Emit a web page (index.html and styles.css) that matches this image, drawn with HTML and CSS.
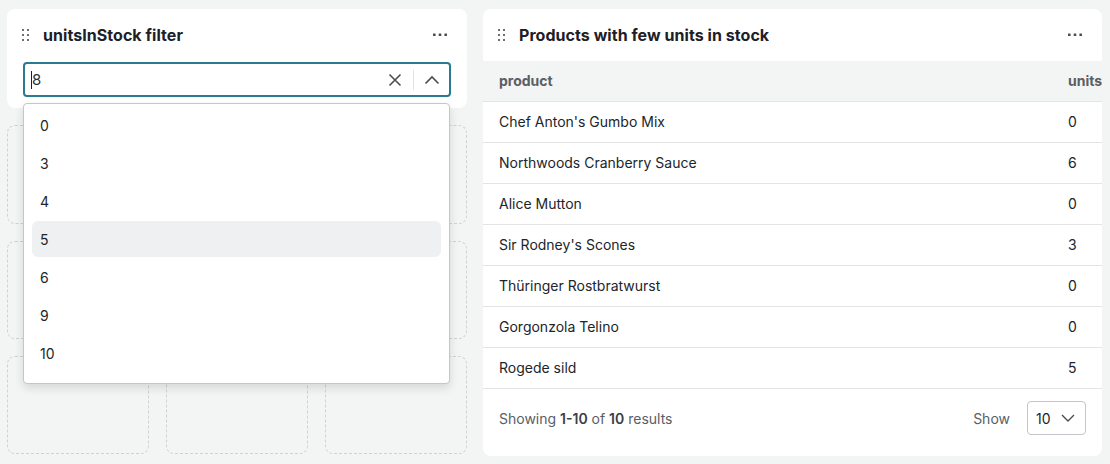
FILE: index.html
```html
<!DOCTYPE html>
<html lang="en">
<head>
<meta charset="utf-8">
<title>Dashboard</title>
<link rel="stylesheet" href="styles.css">
</head>
<body>
<div class="board">
  <div class="left-col">
    <section class="panel filter-panel">
      <header class="panel-head">
        <svg class="handle" width="8" height="12" viewBox="0 0 8 12"><g fill="#6b6f76"><rect x="0" y="0" width="2" height="2"/><rect x="5" y="0" width="2" height="2"/><rect x="0" y="5" width="2" height="2"/><rect x="5" y="5" width="2" height="2"/><rect x="0" y="10" width="2" height="2"/><rect x="5" y="10" width="2" height="2"/></g></svg>
        <h2 class="panel-title">unitsInStock filter</h2>
        <svg class="more" width="14" height="4" viewBox="0 0 14 4"><g fill="#4a4d52"><rect x="0" y="0.5" width="2.6" height="2.6" rx="0.5"/><rect x="5.7" y="0.5" width="2.6" height="2.6" rx="0.5"/><rect x="11.4" y="0.5" width="2.6" height="2.6" rx="0.5"/></g></svg>
      </header>
      <div class="combo">
        <span class="combo-value"><span class="caret"></span>8</span>
        <svg class="clear" width="14" height="14" viewBox="0 0 14 14"><path d="M1.5 1.5 L12.5 12.5 M12.5 1.5 L1.5 12.5" stroke="#4a4d52" stroke-width="1.6" fill="none"/></svg>
        <span class="sep"></span>
        <svg class="chev" width="16" height="10" viewBox="0 0 16 10"><path d="M1.5 8.5 L8 2 L14.5 8.5" stroke="#4a4d52" stroke-width="1.6" fill="none"/></svg>
      </div>
    </section>
    <div class="slots">
      <div class="slot"></div><div class="slot"></div><div class="slot"></div>
      <div class="slot"></div><div class="slot"></div><div class="slot"></div>
      <div class="slot"></div><div class="slot"></div><div class="slot"></div>
    </div>
    <ul class="dropdown">
      <li class="opt">0</li>
      <li class="opt">3</li>
      <li class="opt">4</li>
      <li class="opt active">5</li>
      <li class="opt">6</li>
      <li class="opt">9</li>
      <li class="opt">10</li>
    </ul>
  </div>

  <section class="panel table-panel">
    <header class="panel-head">
      <svg class="handle" width="8" height="12" viewBox="0 0 8 12"><g fill="#6b6f76"><rect x="0" y="0" width="2" height="2"/><rect x="5" y="0" width="2" height="2"/><rect x="0" y="5" width="2" height="2"/><rect x="5" y="5" width="2" height="2"/><rect x="0" y="10" width="2" height="2"/><rect x="5" y="10" width="2" height="2"/></g></svg>
      <h2 class="panel-title">Products with few units in stock</h2>
      <svg class="more" width="14" height="4" viewBox="0 0 14 4"><g fill="#4a4d52"><rect x="0" y="0.5" width="2.6" height="2.6" rx="0.5"/><rect x="5.7" y="0.5" width="2.6" height="2.6" rx="0.5"/><rect x="11.4" y="0.5" width="2.6" height="2.6" rx="0.5"/></g></svg>
    </header>
    <div class="table-wrap">
      <table class="grid">
        <thead>
          <tr><th class="c-prod">product</th><th class="c-units">units</th></tr>
        </thead>
        <tbody>
          <tr><td>Chef Anton's Gumbo Mix</td><td>0</td></tr>
          <tr><td>Northwoods Cranberry Sauce</td><td>6</td></tr>
          <tr><td>Alice Mutton</td><td>0</td></tr>
          <tr><td>Sir Rodney's Scones</td><td>3</td></tr>
          <tr><td>Thüringer Rostbratwurst</td><td>0</td></tr>
          <tr><td>Gorgonzola Telino</td><td>0</td></tr>
          <tr><td>Rogede sild</td><td>5</td></tr>
        </tbody>
      </table>
    </div>
    <footer class="table-foot">
      <span class="count">Showing <b>1-10</b> of <b>10</b> results</span>
      <span class="show">Show</span>
      <span class="pager">10
        <svg width="14" height="8" viewBox="0 0 14 8"><path d="M1 1 L7 7 L13 1" stroke="#4a4d52" stroke-width="1.4" fill="none"/></svg>
      </span>
    </footer>
  </section>
</div>
</body>
</html>
```

FILE: styles.css
```css
* { box-sizing: border-box; }
html, body { margin: 0; padding: 0; }
body {
  background: #f3f4f4;
  font-family: Inter, Roboto, "Liberation Sans", sans-serif;
  color: #21252b;
  font-size: 14px;
}
.board {
  display: grid;
  grid-template-columns: 460px 619px;
  gap: 16px;
  padding: 9px 0 0 7px;
}
.left-col { position: relative; }
.panel {
  background: #fff;
  border-radius: 8px;
}
.filter-panel {
  height: 99px;
  padding: 0 16px;
}
.panel-head {
  display: flex;
  align-items: center;
  height: 52px;
}
.filter-panel .panel-head { height: 51px; margin-bottom: 2px; }
.handle { margin: 0 13px 0 0; flex: none; }
.filter-panel .handle { margin-left: -1px; }
.panel-title {
  margin: 0;
  font-size: 16px;
  font-weight: 700;
  color: #1d2026;
  flex: 1;
  letter-spacing: 0.05px;
}
.more { flex: none; margin-right: 4px; }
.combo {
  height: 35px;
  border: 2px solid #2a7a92;
  border-radius: 4px;
  display: flex;
  align-items: center;
  padding: 0 9px 0 6px;
}
.combo-value {
  flex: 1;
  font-size: 15px;
  color: #2c3036;
  display: flex;
  align-items: center;
}
.caret {
  display: inline-block;
  width: 1px;
  height: 18px;
  background: #1d2026;
}
.clear { margin-right: 11px; }
.sep { width: 1px; height: 20px; background: #e1e3e6; margin-right: 10px; }
.slots {
  margin-top: 17px;
  display: grid;
  grid-template-columns: repeat(3, 142px);
  grid-template-rows: 99px 98px 98px;
  column-gap: 17px;
  row-gap: 17px;
}
.slot {
  border: 1px dashed #cfd2d4;
  border-radius: 8px;
}
.dropdown {
  position: absolute;
  top: 94px;
  left: 16px;
  width: 427px;
  height: 281px;
  margin: 0;
  padding: 3px 8px;
  list-style: none;
  background: #fff;
  border: 1px solid #c3c6ca;
  border-radius: 4px;
  box-shadow: 0 4px 10px rgba(0,0,0,0.12);
}
.opt {
  height: 36px;
  margin-bottom: 2px;
  padding: 0 8px;
  display: flex;
  align-items: center;
  font-size: 14px;
  color: #21252b;
  border-radius: 6px;
}
.opt.active { background: #eff0f2; }

.table-panel {
  height: 447px;
  overflow: hidden;
  display: flex;
  flex-direction: column;
}
.table-panel .panel-head { padding: 0 16px 0 15px; }
.table-panel .more { margin-right: 4px; }
.table-wrap { overflow: hidden; }
.grid {
  border-collapse: collapse;
  width: 640px;
}
.grid th {
  background: #f3f4f4;
  height: 40px;
  text-align: left;
  font-size: 14px;
  font-weight: 700;
  color: #5a5e65;
  padding: 0 16px;
  border-bottom: 1px solid #e2e4e6;
  white-space: nowrap;
}
.grid th.c-prod { width: 569px; }
.grid td {
  height: 41px;
  padding: 0 16px;
  border-bottom: 1px solid #e2e4e6;
  color: #21252b;
}
.table-foot {
  flex: 1;
  display: flex;
  align-items: center;
  padding: 0 16px 8px;
  color: #5a5e65;
}
.count { flex: 1; }
.count b { color: #3a3e45; font-weight: 600; }
.show { margin-right: 17px; }
.pager {
  width: 59px;
  height: 34px;
  border: 1px solid #c3c6ca;
  border-radius: 4px;
  display: flex;
  align-items: center;
  justify-content: space-between;
  padding: 0 10px 0 8px;
  color: #21252b;
}
```
